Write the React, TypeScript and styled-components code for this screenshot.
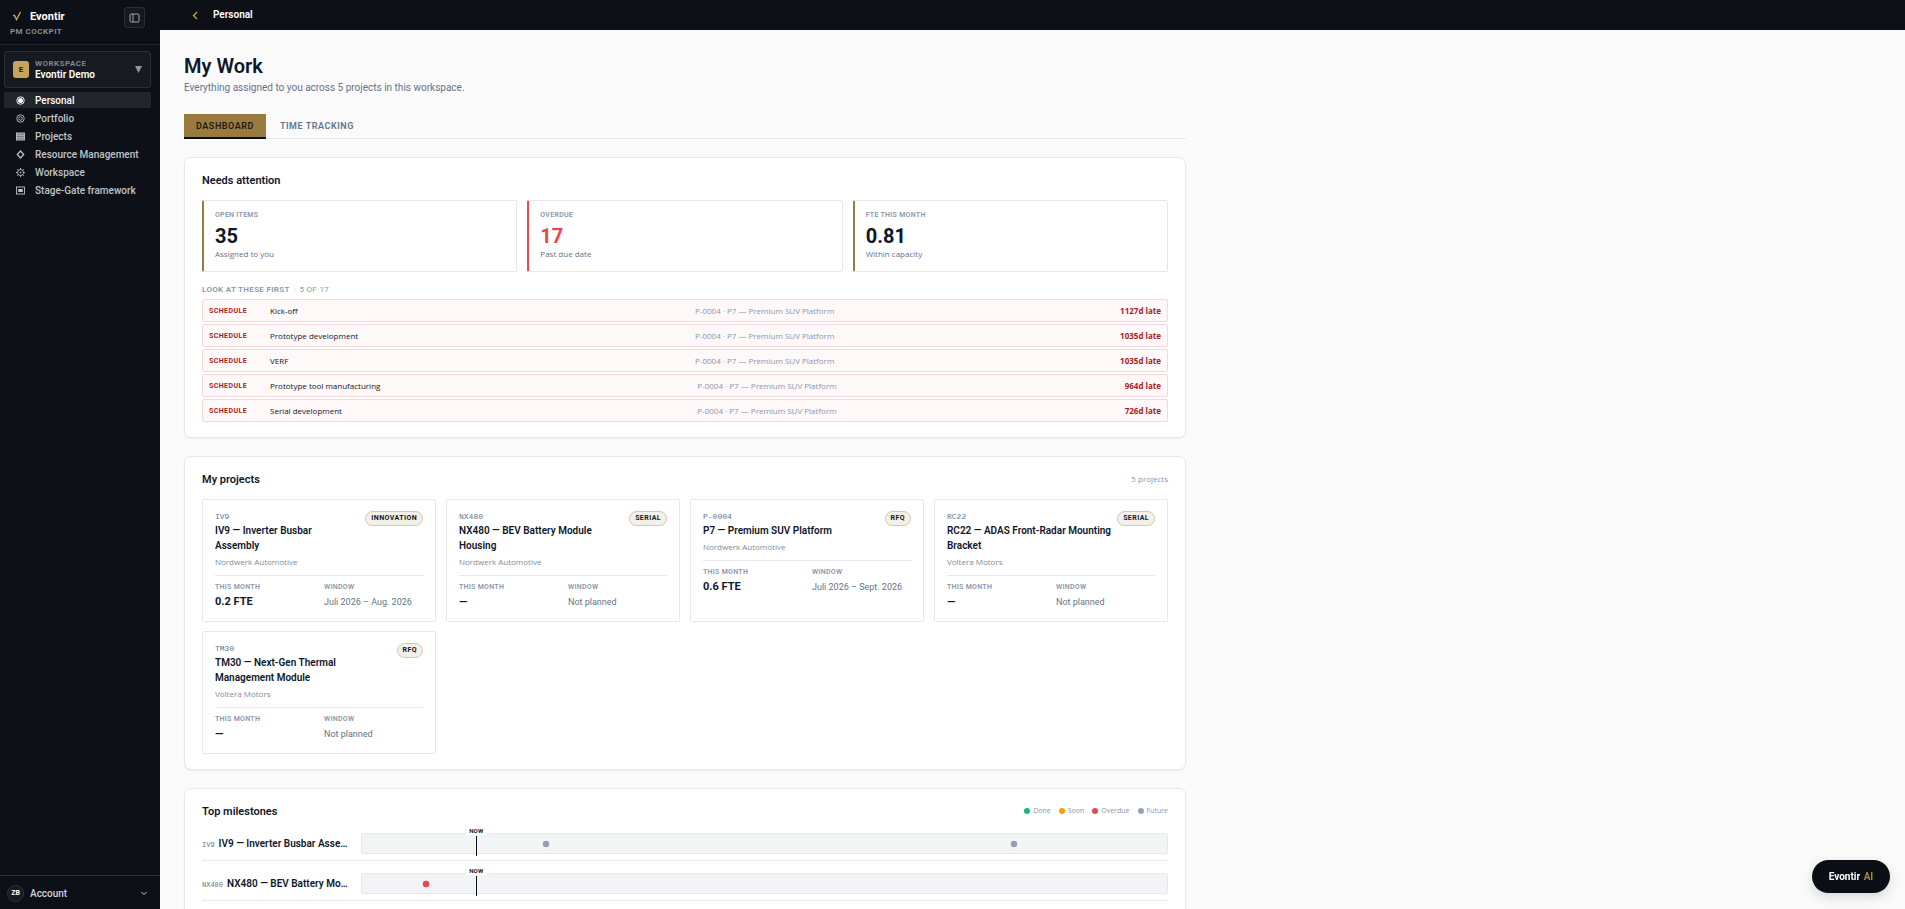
import React from 'react';
import styled, { createGlobalStyle } from 'styled-components';

const sans = "Roboto, 'Liberation Sans', sans-serif";
const small = "'Open Sans', 'Noto Sans', sans-serif";
const mono = "'Liberation Mono', monospace";

const ink = '#0f172a';
const slate = '#64748b';
const faint = '#8a97ab';
const line = '#e5e7eb';
const gold = '#9a7b3f';
const red = '#e5484d';

const GlobalStyle = createGlobalStyle`
  * { box-sizing: border-box; }
  body { margin: 0; background: #fafafa; color: ${ink}; font-family: ${sans}; }
  button { font-family: inherit; cursor: pointer; }
  h1, h2, h3, p, ul, dl, dd { margin: 0; padding: 0; }
  ul { list-style: none; }
`;

const Shell = styled.div`
  display: grid;
  grid-template-columns: 160px minmax(0, 1fr);
  height: 100vh;
`;

/* Sidebar */
const Sidebar = styled.aside`
  display: flex;
  flex-direction: column;
  background: #0d1117;
  color: #fff;
`;
const SidebarHead = styled.div`
  display: flex;
  justify-content: space-between;
  align-items: flex-start;
  padding: 7px 15px 5px 10px;
  border-bottom: 1px solid #23272e;
`;
const Brand = styled.div`
  display: flex;
  align-items: center;
  gap: 8px;
  height: 18px;
  padding-left: 2px;
  font-size: 11px;
  font-weight: 700;
`;
const Product = styled.div`
  font-size: 8px;
  line-height: 14px;
  font-weight: 600;
  letter-spacing: 0.06em;
  color: #8b929c;
`;
const CollapseButton = styled.button`
  display: grid;
  place-items: center;
  width: 21px;
  height: 21px;
  padding: 0;
  border: 1px solid #2a2e35;
  border-radius: 3px;
  background: #15191f;
  color: #a3a7ad;
`;
const WorkspaceButton = styled.button`
  display: flex;
  align-items: center;
  gap: 6px;
  height: 37px;
  margin: 6px 9px 4px 4px;
  padding: 0 8px;
  border: 1px solid #2b3037;
  border-radius: 3px;
  background: #171b21;
  color: #fff;
  text-align: left;
`;
const WorkspaceMark = styled.span`
  display: grid;
  place-items: center;
  width: 16px;
  height: 17px;
  border-radius: 3px;
  background: #c8a45c;
  color: #1a1a1a;
  font-size: 8px;
  font-weight: 700;
`;
const WorkspaceText = styled.span`
  flex: 1;
  font-size: 10px;
  line-height: 12px;
  font-weight: 600;
`;
const WorkspaceKind = styled.span`
  display: block;
  font-size: 8px;
  line-height: 11px;
  letter-spacing: 0.06em;
  color: #858a92;
`;
const Nav = styled.nav`
  display: flex;
  flex-direction: column;
  gap: 2px;
  margin: 0 9px 0 4px;
  flex: 1;
`;
const NavLink = styled.a<{ $active?: boolean }>`
  display: flex;
  align-items: center;
  gap: 10px;
  height: 16px;
  padding-left: 12px;
  border-radius: 2px;
  background: ${(p) => (p.$active ? '#22262b' : 'transparent')};
  color: ${(p) => (p.$active ? '#fff' : '#c0c3c7')};
  font-size: 10px;
  font-weight: 500;
  text-decoration: none;
  white-space: nowrap;
`;
const AccountButton = styled.button`
  display: flex;
  align-items: center;
  gap: 6px;
  height: 34px;
  padding: 1px 12px 0 7px;
  border: 0;
  border-top: 1px solid #2b2f35;
  background: transparent;
  color: #cfd2d6;
  font-size: 10px;
  font-weight: 500;
`;
const Avatar = styled.span`
  display: grid;
  place-items: center;
  width: 17px;
  height: 17px;
  border: 1px solid #2f343b;
  border-radius: 50%;
  background: #171b21;
  color: #fff;
  font-size: 7px;
  font-weight: 700;
`;
const AccountName = styled.span`
  flex: 1;
  text-align: left;
`;

/* Page */
const Page = styled.div`
  display: flex;
  flex-direction: column;
  min-height: 0;
`;
const TopBar = styled.header`
  display: flex;
  align-items: center;
  flex: none;
  gap: 12px;
  height: 30px;
  padding: 0 30px 2px;
  background: #0d1117;
  color: #fff;
  font-size: 10px;
  font-weight: 600;
`;
const BackButton = styled.button`
  display: grid;
  place-items: center;
  width: 11px;
  height: 16px;
  padding: 2px 2px 0 0;
  border: 0;
  background: none;
  color: #d0a44a;
`;
const Main = styled.main`
  flex: 1;
  min-height: 0;
  overflow-y: auto;
  scrollbar-width: none;
  padding: 24px;
`;
const Content = styled.div`
  max-width: 1002px;
`;
const Title = styled.h1`
  font-size: 20px;
  line-height: 24px;
  font-weight: 600;
`;
const Subtitle = styled.p`
  margin-top: 3px;
  font-size: 10px;
  line-height: 14px;
  color: ${slate};
`;
const Tabs = styled.div`
  display: flex;
  gap: 2px;
  margin: 19px 0 18px;
  border-bottom: 1px solid ${line};
`;
const Tab = styled.button<{ $active?: boolean }>`
  height: 25px;
  margin-bottom: -1px;
  padding: 0 12px;
  border: 0;
  border-bottom: 2px solid ${(p) => (p.$active ? '#0b0f16' : 'transparent')};
  background: ${(p) => (p.$active ? gold : 'transparent')};
  color: ${(p) => (p.$active ? '#1b1a17' : slate)};
  font-size: 9px;
  font-weight: 600;
  letter-spacing: 0.06em;
`;
const Cards = styled.div`
  display: flex;
  flex-direction: column;
  gap: 18px;
`;
const Card = styled.section`
  padding: 14px 17px 15px;
  border: 1px solid ${line};
  border-radius: 7px;
  background: #fff;
  box-shadow: 0 1px 2px rgba(15, 23, 42, 0.05);
`;
const CardHead = styled.div<{ $tight?: boolean }>`
  display: flex;
  justify-content: space-between;
  align-items: center;
  height: 16px;
  margin-bottom: ${(p) => (p.$tight ? 2 : 12)}px;
`;
const CardTitle = styled.h2`
  font-size: 11px;
  font-weight: 600;
`;
const Count = styled.span`
  font: 8px/12px ${small};
  color: ${faint};
`;

const Stats = styled.div`
  display: grid;
  grid-template-columns: repeat(3, 1fr);
  gap: 10px;
`;
const Stat = styled.div<{ $accent: string }>`
  min-height: 72px;
  padding: 9px 11px;
  border: 1px solid ${line};
  border-left: 2px solid ${(p) => p.$accent};
  border-radius: 2px;
`;
const Label = styled.div`
  font-size: 7px;
  line-height: 10px;
  font-weight: 600;
  letter-spacing: 0.04em;
  text-transform: uppercase;
  color: ${faint};
`;
const StatValue = styled.div<{ $alert?: boolean }>`
  margin-top: 4px;
  font-size: 20px;
  line-height: 24px;
  font-weight: 700;
  color: ${(p) => (p.$alert ? red : ink)};
`;
const StatNote = styled.div`
  font: 500 8px/12px ${small};
  color: ${slate};
`;

const ListLabel = styled.h3`
  margin: 12px 0 3px;
  font-size: 8px;
  line-height: 12px;
  font-weight: 600;
  letter-spacing: 0.04em;
  color: ${faint};
`;
const ListCount = styled.span`
  margin-left: 5px;
  font-weight: 400;
`;
const AlertList = styled.ul`
  display: flex;
  flex-direction: column;
  gap: 2px;
`;
const AlertRow = styled.li`
  display: grid;
  grid-template-columns: 51px 1fr 1fr auto;
  align-items: center;
  column-gap: 10px;
  height: 23px;
  padding: 0 6px;
  border: 1px solid #f8d7da;
  border-radius: 2px;
  background: #fff8f8;
  font: 8px/12px ${small};
`;
const AlertKind = styled.span`
  font-family: ${sans};
  font-size: 7px;
  font-weight: 700;
  letter-spacing: 0.06em;
  color: #a61e1e;
`;
const AlertTitle = styled.span`
  font-weight: 500;
`;
const AlertProject = styled.span`
  color: ${faint};
`;
const AlertLate = styled.span`
  font-weight: 700;
  color: #a61e1e;
`;

const ProjectGrid = styled.div`
  display: grid;
  grid-template-columns: repeat(4, 1fr);
  gap: 9px 10px;
`;
const Project = styled.article`
  min-height: 123px;
  padding: 11px 12px;
  border: 1px solid ${line};
  border-radius: 2px;
`;
const ProjectHead = styled.div`
  display: flex;
  justify-content: space-between;
  align-items: flex-start;
  gap: 6px;
`;
const ProjectCode = styled.div`
  font: 8px/12px ${mono};
  color: ${slate};
`;
const ProjectName = styled.h3`
  font-size: 10px;
  line-height: 15px;
  font-weight: 600;
  white-space: pre-line;
`;
const Badge = styled.span`
  flex: none;
  height: 15px;
  padding: 0 5px;
  border: 1px solid #d5c8a5;
  border-radius: 8px;
  background: #f3f0e9;
  font-size: 7px;
  line-height: 13px;
  font-weight: 700;
  letter-spacing: 0.06em;
`;
const Customer = styled.div`
  margin-top: 3px;
  padding-bottom: 7px;
  border-bottom: 1px solid ${line};
  font: 8px/12px ${small};
  color: #7f8b9c;
`;
const Facts = styled.dl`
  display: grid;
  grid-template-columns: 1fr 1fr;
  column-gap: 10px;
  padding-top: 6px;
`;
const Fact = styled.dd<{ $strong?: boolean }>`
  margin-top: 3px;
  font-size: ${(p) => (p.$strong ? 11 : 9)}px;
  line-height: 14px;
  font-weight: ${(p) => (p.$strong ? 700 : 400)};
  color: ${(p) => (p.$strong ? ink : slate)};
  white-space: nowrap;
`;

const Legend = styled.ul`
  display: flex;
  gap: 8px;
`;
const LegendItem = styled.li`
  display: flex;
  align-items: center;
  gap: 3px;
  font: 7px/12px ${small};
  color: ${faint};
`;
const Dot = styled.span<{ $color: string }>`
  width: 6px;
  height: 6px;
  border-radius: 50%;
  background: ${(p) => p.$color};
`;
const MilestoneRow = styled.div`
  display: grid;
  grid-template-columns: 150px minmax(0, 1fr);
  align-items: center;
  column-gap: 9px;
  padding: 12px 0 6px;
  border-bottom: 1px solid ${line};
`;
const MilestoneName = styled.div`
  overflow: hidden;
  font-size: 10px;
  line-height: 15px;
  font-weight: 600;
  white-space: nowrap;
  text-overflow: ellipsis;
`;
const MilestoneCode = styled.span`
  margin-right: 4px;
  font: 7px ${mono};
  color: ${slate};
`;
const Track = styled.div`
  position: relative;
  height: 21px;
  border: 1px solid ${line};
  border-radius: 2px;
  background: #f3f4f6;
`;
const NowLine = styled.div`
  position: absolute;
  top: 2px;
  bottom: -3px;
  left: 14.2%;
  width: 1px;
  background: #0b0f16;
`;
const NowLabel = styled.div`
  position: absolute;
  top: -8px;
  left: 14.2%;
  padding: 0 3px;
  transform: translateX(-50%);
  background: #fff;
  font-size: 6px;
  line-height: 9px;
  font-weight: 700;
  letter-spacing: 0.04em;
`;
const Marker = styled.span<{ $color: string }>`
  position: absolute;
  top: 50%;
  width: 9px;
  height: 9px;
  border: 1px solid #fff;
  border-radius: 50%;
  transform: translate(-50%, -50%);
  background: ${(p) => p.$color};
`;
const AiButton = styled.button`
  position: fixed;
  right: 15px;
  bottom: 16px;
  width: 78px;
  height: 33px;
  padding: 0;
  border: 0;
  border-radius: 17px;
  background: #0b0e15;
  box-shadow: 0 4px 12px rgba(15, 23, 42, 0.15);
  color: #fff;
  font-size: 10px;
  font-weight: 700;
`;
const AiWord = styled.span`
  margin-left: 1px;
  color: #a8853c;
`;

const NavIcon = ({ name }: { name: string }) => (
  <svg width="9" height="9" viewBox="0 0 18 18" fill="none" stroke="currentColor" strokeWidth="1.8" aria-hidden="true">
    {name === 'personal' && (<><circle cx="9" cy="9" r="7.5" /><circle cx="9" cy="9" r="5" fill="currentColor" stroke="none" /></>)}
    {name === 'portfolio' && (<><circle cx="9" cy="9" r="7.5" /><circle cx="9" cy="9" r="3.5" /></>)}
    {name === 'projects' && (<><rect x="1" y="2" width="16" height="14" fill="currentColor" fillOpacity="0.6" /><path d="M1 6.6h16M1 11.4h16" /></>)}
    {name === 'resources' && <path d="M9 2l6.5 7L9 16 2.500 9z" strokeWidth="2.4" />}
    {name === 'workspace' && (<><circle cx="9" cy="9" r="6" /><circle cx="9" cy="9" r="1" fill="currentColor" /><path d="M9 0v3M9 15v3M0 9h3M15 9h3M2.600 2.600l2 2M13.400 13.400l2 2M2.600 15.400l2-2M13.400 4.600l2-2" /></>)}
    {name === 'stage' && (<><rect x="1" y="2" width="16" height="14" /><rect x="4.5" y="6" width="9" height="6" fill="currentColor" stroke="none" /></>)}
  </svg>
);

const nav = [
  ['personal', 'Personal'],
  ['portfolio', 'Portfolio'],
  ['projects', 'Projects'],
  ['resources', 'Resource Management'],
  ['workspace', 'Workspace'],
  ['stage', 'Stage-Gate framework'],
];

const stats = [
  { label: 'Open items', value: '35', note: 'Assigned to you', accent: gold },
  { label: 'Overdue', value: '17', note: 'Past due date', accent: red, alert: true },
  { label: 'FTE this month', value: '0.81', note: 'Within capacity', accent: gold },
];

const alerts = [
  ['Kick-off', '1127d late'],
  ['Prototype development', '1035d late'],
  ['VERF', '1035d late'],
  ['Prototype tool manufacturing', '964d late'],
  ['Serial development', '726d late'],
];

type Milestone = { at: number; color: string };
type ProjectData = {
  code: string; name: string; customer: string; stage: string; fte: string; span: string; milestones: Milestone[];
};

const projects: ProjectData[] = [
  { code: 'IV9', name: 'IV9 — Inverter Busbar\nAssembly', customer: 'Nordwerk Automotive', stage: 'INNOVATION', fte: '0.2 FTE', span: 'Juli 2026 – Aug. 2026', milestones: [{ at: 22.8, color: '#94a0b4' }, { at: 81, color: '#94a0b4' }] },
  { code: 'NX480', name: 'NX480 — BEV Battery Module Housing', customer: 'Nordwerk Automotive', stage: 'SERIAL', fte: '—', span: 'Not planned', milestones: [{ at: 8, color: red }] },
  { code: 'P-0004', name: 'P7 — Premium SUV Platform', customer: 'Nordwerk Automotive', stage: 'RFQ', fte: '0.6 FTE', span: 'Juli 2026 – Sept. 2026', milestones: [] },
  { code: 'RC22', name: 'RC22 — ADAS Front-Radar Mounting Bracket', customer: 'Voltera Motors', stage: 'SERIAL', fte: '—', span: 'Not planned', milestones: [] },
  { code: 'TM30', name: 'TM30 — Next-Gen Thermal Management Module', customer: 'Voltera Motors', stage: 'RFQ', fte: '—', span: 'Not planned', milestones: [] },
];

const legend = [
  ['Done', '#10b981'],
  ['Soon', '#f59e0b'],
  ['Overdue', red],
  ['Future', '#94a3b8'],
];

export default function App() {
  return (
    <>
      <GlobalStyle />
      <Shell>
        <Sidebar>
          <SidebarHead>
            <div>
              <Brand>
                <svg width="10" height="10" viewBox="0 0 10 10" fill="none" stroke="#c8a45c" strokeWidth="1.4" aria-hidden="true">
                  <path d="M1 4.500h1.500L4.500 8.500 8.500 1" />
                </svg>
                Evontir
              </Brand>
              <Product>PM COCKPIT</Product>
            </div>
            <CollapseButton aria-label="Collapse sidebar">
              <svg width="11" height="10" viewBox="0 0 11 10" fill="none" stroke="currentColor" aria-hidden="true">
                <rect x="1" y="1" width="9" height="8" rx="1" />
                <path d="M4 1v8" />
              </svg>
            </CollapseButton>
          </SidebarHead>
          <WorkspaceButton>
            <WorkspaceMark>E</WorkspaceMark>
            <WorkspaceText>
              <WorkspaceKind>WORKSPACE</WorkspaceKind>
              Evontir Demo
            </WorkspaceText>
            <svg width="7" height="7" viewBox="0 0 7 7" fill="#8f949b" aria-hidden="true">
              <path d="M0 0h7L3.500 7z" />
            </svg>
          </WorkspaceButton>
          <Nav>
            {nav.map(([icon, text]) => (
              <NavLink key={icon} href={`#${icon}`} $active={icon === 'personal'}>
                <NavIcon name={icon} />
                {text}
              </NavLink>
            ))}
          </Nav>
          <AccountButton>
            <Avatar>ZB</Avatar>
            <AccountName>Account</AccountName>
            <svg width="8" height="8" viewBox="0 0 8 8" fill="none" stroke="currentColor" aria-hidden="true">
              <path d="M1.500 3L4 5.500 6.500 3" />
            </svg>
          </AccountButton>
        </Sidebar>

        <Page>
          <TopBar>
            <BackButton aria-label="Back">
              <svg width="6" height="9" viewBox="0 0 6 9" fill="none" stroke="currentColor" strokeWidth="1.3" aria-hidden="true">
                <path d="M5 1L1.500 4.500 5 8" />
              </svg>
            </BackButton>
            Personal
          </TopBar>
          <Main>
            <Content>
              <Title>My Work</Title>
              <Subtitle>Everything assigned to you across 5 projects in this workspace.</Subtitle>
              <Tabs role="tablist">
                <Tab role="tab" aria-selected $active>DASHBOARD</Tab>
                <Tab role="tab" aria-selected={false}>TIME TRACKING</Tab>
              </Tabs>

              <Cards>
                <Card>
                  <CardHead><CardTitle>Needs attention</CardTitle></CardHead>
                  <Stats>
                    {stats.map((s) => (
                      <Stat key={s.label} $accent={s.accent}>
                        <Label>{s.label}</Label>
                        <StatValue $alert={s.alert}>{s.value}</StatValue>
                        <StatNote>{s.note}</StatNote>
                      </Stat>
                    ))}
                  </Stats>
                  <ListLabel>
                    LOOK AT THESE FIRST<ListCount>· 5 OF 17</ListCount>
                  </ListLabel>
                  <AlertList>
                    {alerts.map(([title, late]) => (
                      <AlertRow key={title}>
                        <AlertKind>SCHEDULE</AlertKind>
                        <AlertTitle>{title}</AlertTitle>
                        <AlertProject>P-0004 · P7 — Premium SUV Platform</AlertProject>
                        <AlertLate>{late}</AlertLate>
                      </AlertRow>
                    ))}
                  </AlertList>
                </Card>

                <Card>
                  <CardHead>
                    <CardTitle>My projects</CardTitle>
                    <Count>5 projects</Count>
                  </CardHead>
                  <ProjectGrid>
                    {projects.map((p) => (
                      <Project key={p.code}>
                        <ProjectHead>
                          <div>
                            <ProjectCode>{p.code}</ProjectCode>
                            <ProjectName>{p.name}</ProjectName>
                          </div>
                          <Badge>{p.stage}</Badge>
                        </ProjectHead>
                        <Customer>{p.customer}</Customer>
                        <Facts>
                          <div>
                            <Label as="dt">This month</Label>
                            <Fact $strong>{p.fte}</Fact>
                          </div>
                          <div>
                            <Label as="dt">Window</Label>
                            <Fact>{p.span}</Fact>
                          </div>
                        </Facts>
                      </Project>
                    ))}
                  </ProjectGrid>
                </Card>

                <Card>
                  <CardHead $tight>
                    <CardTitle>Top milestones</CardTitle>
                    <Legend>
                      {legend.map(([text, color]) => (
                        <LegendItem key={text}><Dot $color={color} />{text}</LegendItem>
                      ))}
                    </Legend>
                  </CardHead>
                  {projects.map((p) => (
                    <MilestoneRow key={p.code}>
                      <MilestoneName><MilestoneCode>{p.code}</MilestoneCode>{p.name}</MilestoneName>
                      <Track>
                        <NowLabel>NOW</NowLabel>
                        <NowLine />
                        {p.milestones.map((m) => (
                          <Marker key={m.at} $color={m.color} style={{ left: `${m.at}%` }} />
                        ))}
                      </Track>
                    </MilestoneRow>
                  ))}
                </Card>
              </Cards>
            </Content>
          </Main>
        </Page>
      </Shell>
      <AiButton>Evontir <AiWord>AI</AiWord></AiButton>
    </>
  );
}
